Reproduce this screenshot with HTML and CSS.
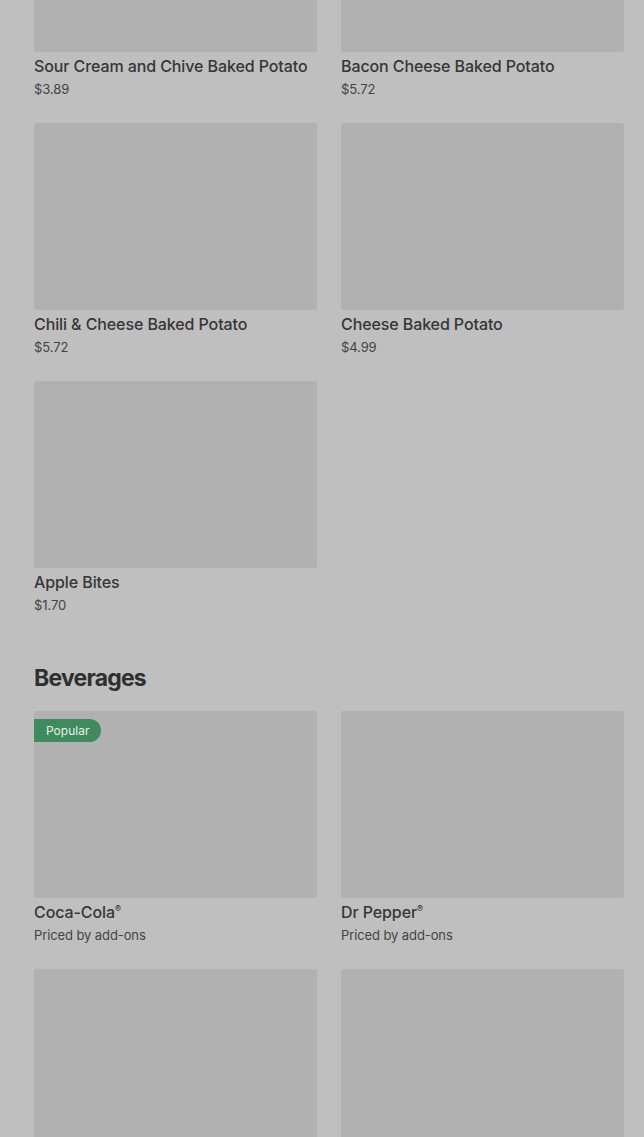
FILE: index.html
```html
<!DOCTYPE html>
<html lang="en">
<head>
    <meta charset="UTF-8">
    <title>Menu</title>
    <link rel="stylesheet" href="styles.css">
</head>
<body>
    <div class="menu">
        <section class="category">
            <div class="items">
                <div class="item">
                    <div class="photo"></div>
                    <p class="name">Sour Cream and Chive Baked Potato</p>
                    <p class="price">$3.89</p>
                </div>
                <div class="item">
                    <div class="photo"></div>
                    <p class="name">Bacon Cheese Baked Potato</p>
                    <p class="price">$5.72</p>
                </div>
                <div class="item">
                    <div class="photo"></div>
                    <p class="name">Chili &amp; Cheese Baked Potato</p>
                    <p class="price">$5.72</p>
                </div>
                <div class="item">
                    <div class="photo"></div>
                    <p class="name">Cheese Baked Potato</p>
                    <p class="price">$4.99</p>
                </div>
                <div class="item">
                    <div class="photo"></div>
                    <p class="name">Apple Bites</p>
                    <p class="price">$1.70</p>
                </div>
            </div>
        </section>

        <section class="category">
            <h2>Beverages</h2>
            <div class="items">
                <div class="item">
                    <div class="photo">
                        <span class="badge">Popular</span>
                    </div>
                    <p class="name">Coca-Cola<sup>®</sup></p>
                    <p class="price">Priced by add-ons</p>
                </div>
                <div class="item">
                    <div class="photo"></div>
                    <p class="name">Dr Pepper<sup>®</sup></p>
                    <p class="price">Priced by add-ons</p>
                </div>
                <div class="item">
                    <div class="photo"></div>
                    <p class="name">&nbsp;</p>
                    <p class="price">&nbsp;</p>
                </div>
                <div class="item">
                    <div class="photo"></div>
                    <p class="name">&nbsp;</p>
                    <p class="price">&nbsp;</p>
                </div>
            </div>
        </section>
    </div>
</body>
</html>
```

FILE: styles.css
```css
body {
    font-family: Inter, "Noto Sans", sans-serif;
    background-color: #bfbfbf;
    color: #363636;
    margin: 0;
    overflow: hidden;
}
.menu {
    margin-top: -135px;
    padding: 0 20px 0 34px;
}
.category h2 {
    font-size: 23px;
    line-height: 32px;
    font-weight: 700;
    letter-spacing: -0.8px;
    color: #2f2f2f;
    margin: 47px 0 17px;
}
.items {
    display: grid;
    grid-template-columns: 1fr 1fr;
    column-gap: 24px;
    row-gap: 24px;
}
.photo {
    position: relative;
    height: 187px;
    background-color: #b1b1b1;
    border-radius: 2px;
}
.badge {
    position: absolute;
    top: 8px;
    left: 0;
    padding: 0 12px;
    height: 23px;
    line-height: 23px;
    font-size: 12px;
    color: #e6efe9;
    background-color: #3f8a5e;
    border-radius: 0 12px 12px 0;
}
.name {
    margin: 3px 0 0;
    font-size: 16px;
    line-height: 22px;
    font-weight: 500;
    letter-spacing: -0.1px;
    color: #363636;
    white-space: nowrap;
}
.name sup {
    font-size: 9px;
    line-height: 0;
    vertical-align: 6px;
}
.price {
    margin: 2px 0 0;
    font-size: 13px;
    line-height: 20px;
    letter-spacing: -0.1px;
    color: #444444;
}
```
